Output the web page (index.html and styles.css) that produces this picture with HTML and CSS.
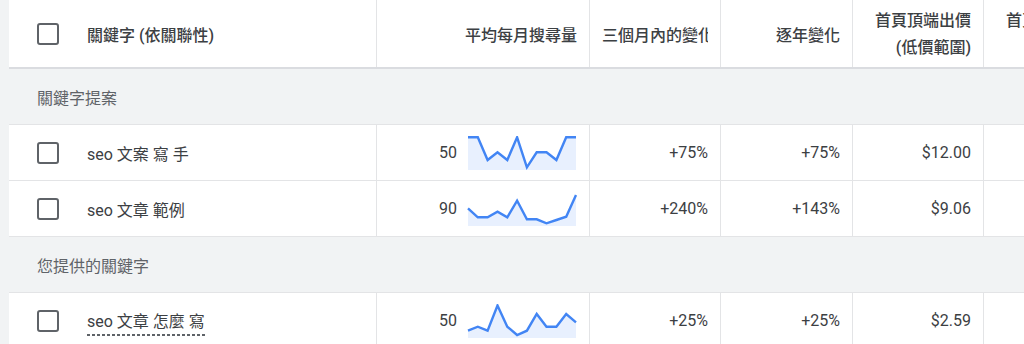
FILE: index.html
```html
<!DOCTYPE html>
<html lang="zh-Hant">
<head>
<meta charset="utf-8">
<title>關鍵字</title>
<link rel="stylesheet" href="styles.css">
</head>
<body>
<div class="table">
  <div class="row head">
    <div class="cell kw"><span class="cb"></span><span class="label">關鍵字 (依關聯性)</span></div>
    <div class="cell"><span class="label">平均每月搜尋量</span></div>
    <div class="cell"><span class="label">三個月內的變化</span></div>
    <div class="cell"><span class="label">逐年變化</span></div>
    <div class="cell"><span class="label two">首頁頂端出價<br>(低價範圍)</span></div>
    <div class="cell"><span class="label two">首頁頂端出價<br>(高價範圍)</span></div>
  </div>

  <div class="group">關鍵字提案</div>

  <div class="row">
    <div class="cell kw"><span class="cb"></span><span class="label">seo 文案 寫 手</span></div>
    <div class="cell vol">
      <span class="num">50</span>
      <svg class="spark" width="110" height="34" viewBox="0 0 110 34">
        <polygon class="area" points="1,34 1,1.3 10.8,1.3 20.6,24 30.5,16.3 40.3,24 50.1,1.3 59.9,31.3 69.7,16.3 79.5,16.3 89.4,24 99.2,1.3 109,1.3 109,34"/>
        <polyline class="line" points="1,1.3 10.8,1.3 20.6,24 30.5,16.3 40.3,24 50.1,1.3 59.9,31.3 69.7,16.3 79.5,16.3 89.4,24 99.2,1.3 109,1.3"/>
      </svg>
    </div>
    <div class="cell"><span class="label">+75%</span></div>
    <div class="cell"><span class="label">+75%</span></div>
    <div class="cell"><span class="label">$12.00</span></div>
    <div class="cell"></div>
  </div>

  <div class="row">
    <div class="cell kw"><span class="cb"></span><span class="label">seo 文章 範例</span></div>
    <div class="cell vol">
      <span class="num">90</span>
      <svg class="spark" width="110" height="34" viewBox="0 0 110 34">
        <polygon class="area" points="1,34 1,16.3 10.8,25.3 20.6,25.3 30.5,19.7 40.3,25.3 50.1,8.7 59.9,27.3 69.7,27.3 79.5,31.3 89.4,28 99.2,24.7 109,3 109,34"/>
        <polyline class="line" points="1,16.3 10.8,25.3 20.6,25.3 30.5,19.7 40.3,25.3 50.1,8.7 59.9,27.3 69.7,27.3 79.5,31.3 89.4,28 99.2,24.7 109,3"/>
      </svg>
    </div>
    <div class="cell"><span class="label">+240%</span></div>
    <div class="cell"><span class="label">+143%</span></div>
    <div class="cell"><span class="label">$9.06</span></div>
    <div class="cell"></div>
  </div>

  <div class="group">您提供的關鍵字</div>

  <div class="row">
    <div class="cell kw"><span class="cb"></span><span class="dashed">seo 文章 怎麼 寫</span></div>
    <div class="cell vol">
      <span class="num">50</span>
      <svg class="spark" width="110" height="34" viewBox="0 0 110 34">
        <polygon class="area" points="1,34 1,26.7 10.8,22.7 20.6,26.7 30.5,1.5 40.3,22.7 50.1,31 59.9,26.7 69.7,10 79.5,22.7 89.4,22.7 99.2,10 109,18.3 109,34"/>
        <polyline class="line" points="1,26.7 10.8,22.7 20.6,26.7 30.5,1.5 40.3,22.7 50.1,31 59.9,26.7 69.7,10 79.5,22.7 89.4,22.7 99.2,10 109,18.3"/>
      </svg>
    </div>
    <div class="cell"><span class="label">+25%</span></div>
    <div class="cell"><span class="label">+25%</span></div>
    <div class="cell"><span class="label">$2.59</span></div>
    <div class="cell"></div>
  </div>
</div>
</body>
</html>
```

FILE: styles.css
```css
html, body {
  margin: 0;
  height: 100%;
  overflow: hidden;
  background: #f1f3f4;
}

body {
  font-family: Roboto, "Noto Sans CJK TC", sans-serif;
  font-size: 16px;
  color: #3c4043;
}

.table {
  margin-left: 9px;
  width: 1105px;
  background: #ffffff;
}

.row {
  display: grid;
  grid-template-columns: 367px 213px 131px 132px 131px 131px;
  height: 56px;
  box-sizing: border-box;
  border-bottom: 1px solid #e3e4e6;
}

.head {
  height: 69px;
  border-bottom: 2px solid #dadce0;
  font-weight: 500;
}

.cell {
  display: flex;
  align-items: center;
  justify-content: flex-end;
  padding: 0 12px;
  border-left: 1px solid #e3e4e6;
  min-width: 0;
  overflow: hidden;
}

.cell.kw {
  justify-content: flex-start;
  border-left: none;
  padding-left: 28px;
  gap: 28px;
}

.label {
  flex: 0 1 auto;
  min-width: 0;
  overflow: hidden;
  white-space: nowrap;
  text-align: right;
}

.kw .label {
  text-align: left;
}

.label.two {
  line-height: 27px;
}

.cb {
  flex: none;
  width: 18px;
  height: 18px;
  border: 2px solid #5f6368;
  border-radius: 3px;
}

.group {
  display: flex;
  align-items: center;
  height: 56px;
  box-sizing: border-box;
  padding-left: 28px;
  background: #f1f3f4;
  border-bottom: 1px solid #e3e4e6;
  color: #5f6368;
}

.vol {
  gap: 10px;
}

.spark {
  flex: none;
  display: block;
}

.spark .area {
  fill: #e8f0fe;
}

.spark .line {
  fill: none;
  stroke: #4285f4;
  stroke-width: 2.4;
  stroke-linejoin: miter;
}

.dashed {
  flex: none;
  white-space: nowrap;
  line-height: 20px;
  margin-top: 6px;
  padding-bottom: 4px;
  background-image: linear-gradient(to right, #5f6368 60%, transparent 60%);
  background-size: 5px 1.5px;
  background-repeat: repeat-x;
  background-position: left bottom;
}
```
